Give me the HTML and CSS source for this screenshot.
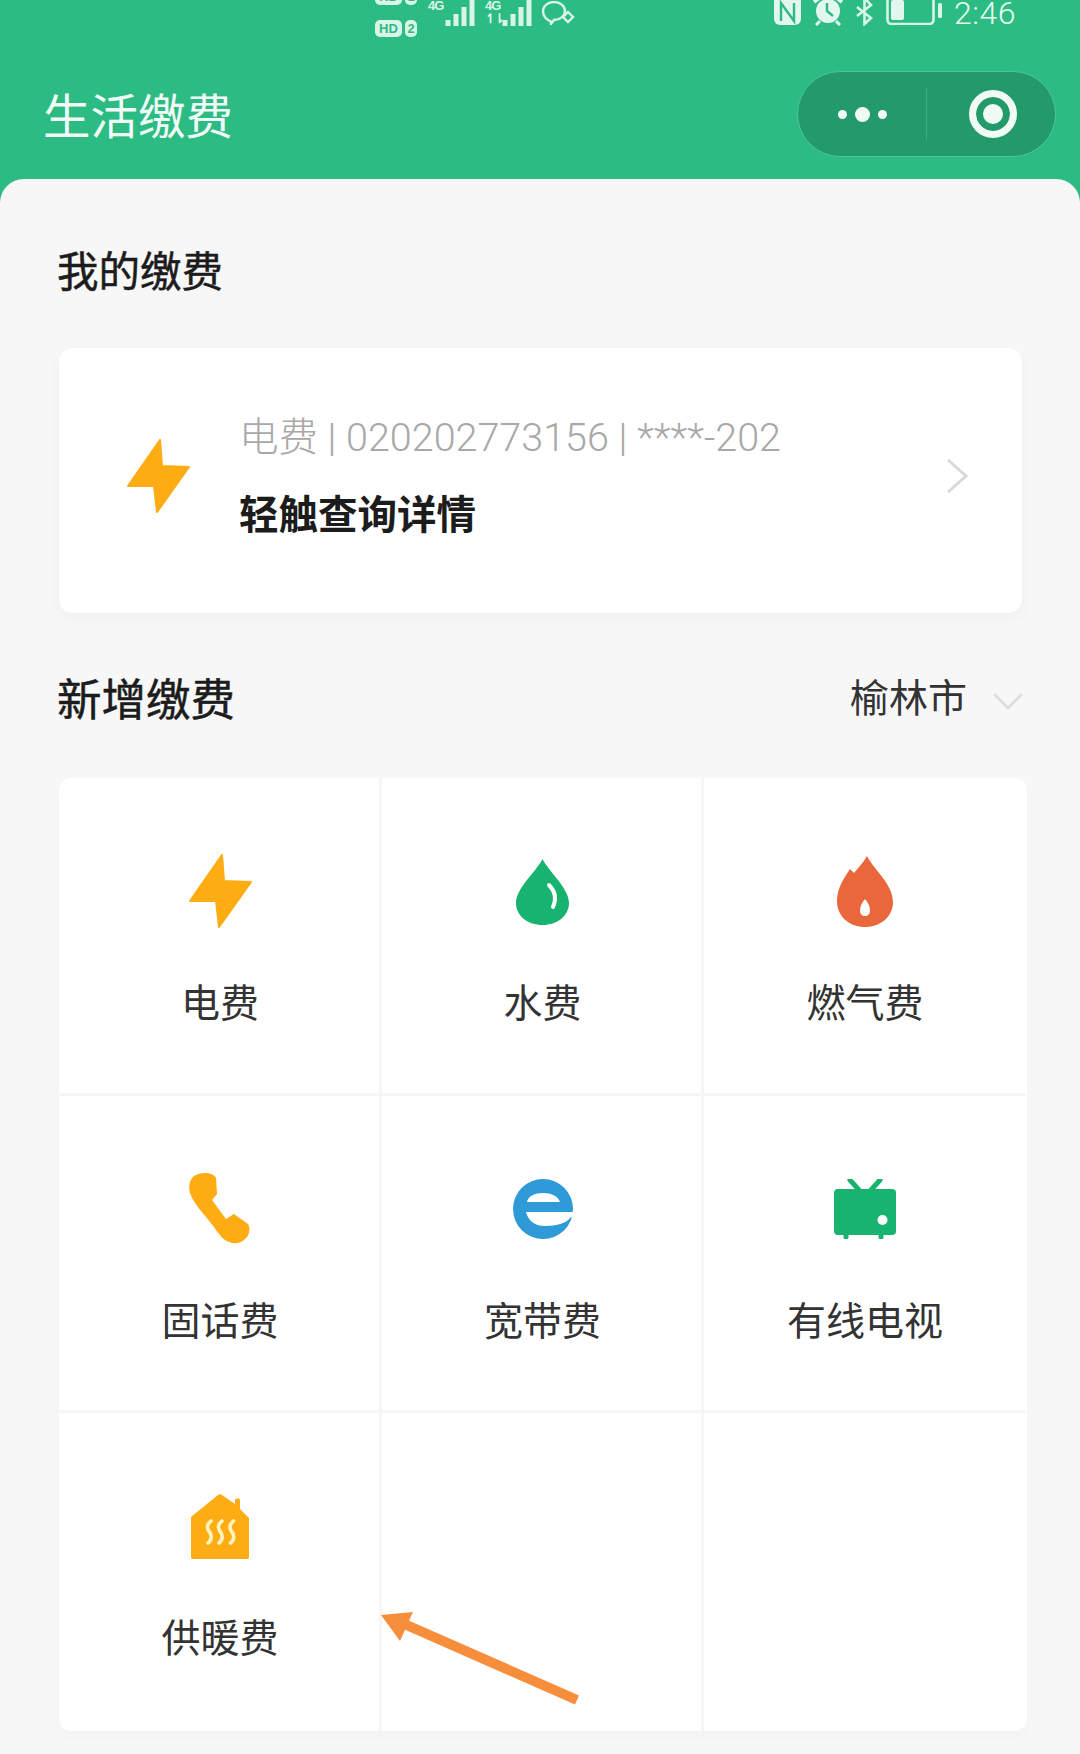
FILE: index.html
```html
<!DOCTYPE html>
<html lang="zh">
<head>
	<meta charset="utf-8">
	<title>生活缴费</title>
	<link rel="stylesheet" href="styles.css">
</head>
<body>
	<header class="top">
		<div class="status">
			<div class="status-left">
				<div class="hd-col">
					<div class="hd-row"><span class="pill">HD</span><span class="pill sim">1</span></div>
					<div class="hd-row"><span class="pill">HD</span><span class="pill sim">2</span></div>
				</div>
				<div class="signal">
					<span class="net">4G</span>
					<svg width="32" height="26" viewBox="0 0 32 26"><path d="M3 26v-6M11 26v-12M19 26v-19M27 26v-26" stroke="#d8f5e8" stroke-width="5"/></svg>
				</div>
				<div class="signal">
					<span class="net">4G<i>↿⇂</i></span>
					<svg width="32" height="26" viewBox="0 0 32 26"><path d="M3 26v-6M11 26v-12M19 26v-19M27 26v-26" stroke="#d8f5e8" stroke-width="5"/></svg>
				</div>
				<svg class="chat" width="33" height="24" viewBox="0 0 33 24" fill="none" stroke="#d8f5e8" stroke-width="2.4">
					<path d="M9 20.5 C3 18 1 14 1 10 C1 5 6 1 12 1 C18 1 23 5 23 10 C23 15 18 19 12 19 L9 23 Z"/>
					<path d="M26 11 L31 16 L26 21 L21 16 Z"/>
				</svg>
			</div>
			<div class="status-right">
				<svg width="27" height="25" viewBox="0 0 27 25"><rect y="-6" width="27" height="31" rx="6" fill="#e2f7ed"/><path d="M7 21 V3 L20 21 V3" fill="none" stroke="#2dbb84" stroke-width="2.4"/></svg>
				<svg width="30" height="26" viewBox="0 0 30 26"><circle cx="15" cy="11" r="12" fill="#e2f7ed"/><path d="M14 3 V11 L20 16" fill="none" stroke="#2dbb84" stroke-width="2.4"/><path d="M7 21 L3 25 M23 21 L27 25" stroke="#e2f7ed" stroke-width="3"/><path d="M1 2 L6 -2 M29 2 L24 -2" stroke="#e2f7ed" stroke-width="4"/></svg>
				<svg width="19" height="26" viewBox="0 0 19 26" fill="none" stroke="#d8f5e8" stroke-width="2.6"><path d="M2 7 L16 18 L9.500 24 V-2 L16 5 L2 16"/></svg>
				<svg width="56" height="25" viewBox="0 0 56 25"><rect x="1.500" y="-4" width="46" height="28" rx="4" fill="none" stroke="#d8f5e8" stroke-width="2.6"/><rect x="5" y="0" width="13" height="20" rx="2" fill="#e2f7ed"/><rect x="52" y="3" width="4" height="15" rx="1.500" fill="#d8f5e8"/></svg>
				<span class="clock">2:46</span>
			</div>
		</div>
		<div class="nav">
			<h1 class="nav-title">生活缴费</h1>
			<div class="capsule">
				<div class="capsule-dots"><i></i><b></b><i></i></div>
				<div class="capsule-ring"><span></span></div>
			</div>
		</div>
	</header>

	<main class="sheet">
		<h2 class="title">我的缴费</h2>
		<section class="bill">
			<svg class="bill-icon" width="63" height="74" viewBox="0 0 63 74"><use href="#bolt"/></svg>
			<div class="bill-text">
				<div class="bill-no">电费 | 020202773156 | ****-202</div>
				<div class="bill-hint">轻触查询详情</div>
			</div>
			<svg class="bill-more" width="22" height="36" viewBox="0 0 22 36" fill="none" stroke="#d9d9d9" stroke-width="3"><path d="M2 2 L20 18 L2 34"/></svg>
		</section>

		<div class="add-head">
			<h2 class="title add-title">新增缴费</h2>
			<span class="city">榆林市</span>
			<svg class="city-more" width="30" height="18" viewBox="0 0 30 18" fill="none" stroke="#dcdcdc" stroke-width="2.5"><path d="M1 2 L15 16 L29 2"/></svg>
		</div>

		<section class="grid">
			<div class="cell">
				<div class="cell-icon"><svg width="63" height="74" viewBox="0 0 63 74"><use href="#bolt"/></svg></div>
				<div class="cell-name">电费</div>
			</div>
			<div class="cell">
				<div class="cell-icon">
					<svg width="53" height="67" viewBox="0 0 53 67">
						<path d="M26.500 1 C33 14 53 30 53 45 C53 58 41 67 26.500 67 C12 67 0 58 0 45 C0 30 20 14 26.500 1 Z" fill="#17b36f"/>
						<path d="M33 27 C39 33 41 40 37 49" fill="none" stroke="#fff" stroke-width="4" stroke-linecap="round"/>
					</svg>
				</div>
				<div class="cell-name">水费</div>
			</div>
			<div class="cell">
				<div class="cell-icon">
					<svg width="56" height="71" viewBox="0 0 56 71">
						<path d="M30 0 C37 14 56 28 56 46 C56 61 43 71 28 71 C13 71 0 61 0 45 C0 32 7 22 13 13 L17 17 C21 12 26 7 30 0 Z" fill="#e9673a"/>
						<path d="M28 43 C31 47 33 50 33 54 C33 58 31 60 28 60 C25 60 23 58 23 54 C23 50 25 47 28 43 Z" fill="#fff"/>
					</svg>
				</div>
				<div class="cell-name">燃气费</div>
			</div>
			<div class="cell">
				<div class="cell-icon">
					<svg width="62" height="71" viewBox="0 0 62 71">
						<path d="M16 0 C21 0 26 2 27 5 L28 21 L23 27 L37 46 L45 41 L59 51 C62 56 60 63 56 66 C52 70 47 71 43 70 C35 68 31 63 25 54 C15 41 4 30 1 20 C-1 12 1 6 5 3 C8 1 12 0 16 0 Z" fill="#fdac13"/>
					</svg>
				</div>
				<div class="cell-name">固话费</div>
			</div>
			<div class="cell">
				<div class="cell-icon">
					<svg width="60" height="60" viewBox="0 0 60 60">
						<ellipse cx="30" cy="30" rx="30" ry="30" fill="#2f9ad8"/>
						<path d="M14 23 C15 17 22 14 30 14 C38 14 45 17 47 23 Z" fill="#fff"/>
						<path d="M13 33 H62 V38 H58 C54 44 44 47 32 47 C21 47 15 41 13 33 Z" fill="#fff"/>
					</svg>
				</div>
				<div class="cell-name">宽带费</div>
			</div>
			<div class="cell">
				<div class="cell-icon">
					<svg width="62" height="60" viewBox="0 0 62 60">
						<path d="M16 1 L25 11 M46 1 L37 11" stroke="#17b36f" stroke-width="5" stroke-linecap="round"/>
						<path d="M12 54 V58 M47 54 V58" stroke="#17b36f" stroke-width="5" stroke-linecap="round"/>
						<rect y="10" width="62" height="46" rx="4" fill="#17b36f"/>
						<circle cx="48.500" cy="41" r="5" fill="#fff"/>
					</svg>
				</div>
				<div class="cell-name">有线电视</div>
			</div>
			<div class="cell">
				<div class="cell-icon">
					<svg width="58" height="65" viewBox="0 0 58 65">
						<path d="M27 1 C28 0 30 0 31 1 L44 10 V6 C44 4 49 4 49 6 V15 L58 24 V63 C58 64 57 65 56 65 H2 C1 65 0 64 0 63 V23 Z" fill="#fdac13"/>
						<path d="M20 27 C15 31 16 35 18.500 38 C21 41 21 46 17 49 M31 27 C26 31 27 35 29.500 38 C32 41 32 46 28 49 M42.500 27 C37.500 31 38.500 35 41 38 C43.500 41 43.500 46 39.500 49" fill="none" stroke="#fff3c0" stroke-width="3.600" stroke-linecap="round"/>
					</svg>
				</div>
				<div class="cell-name">供暖费</div>
			</div>
			<div class="cell"></div>
			<div class="cell"></div>
			<svg class="arrow" width="202" height="100" viewBox="0 0 202 100">
				<path d="M1 5 L33 2 L20 31 Z" fill="#f78e3c"/>
				<path d="M22 13 L197 90" stroke="#f78e3c" stroke-width="10"/>
			</svg>
		</section>
	</main>

	<svg class="defs" width="0" height="0">
		<symbol id="bolt" viewBox="0 0 63 74">
			<path d="M33 1 L35 27 L62 28 L30 73 L27 47 L1 47 Z" fill="#fdac13" stroke="#fdac13" stroke-width="2" stroke-linejoin="round"/>
		</symbol>
	</svg>
</body>
</html>
```

FILE: styles.css
```css
* {
	box-sizing: border-box;
}
html, body {
	height: 100%;
}
body {
	margin: 0;
	display: flex;
	flex-direction: column;
	overflow: hidden;
	background: #2dbb84;
	font-family: "Noto Sans CJK SC", "Noto Sans", sans-serif;
	color: #333;
}
h1, h2 {
	margin: 0;
	font-weight: normal;
}

/* top green bar */
.top {
	height: 179px;
	flex: none;
}
.status {
	height: 40px;
	display: flex;
	justify-content: space-between;
	padding: 0 64px 0 375px;
	overflow: hidden;
	color: #d8f5e8;
}
.status-left {
	display: flex;
	align-items: flex-start;
}
.hd-col {
	width: 53px;
	margin-top: -24px;
}
.hd-row {
	display: flex;
	gap: 3px;
	height: 32px;
	align-items: flex-end;
	padding-bottom: 3px;
}
.pill {
	background: #d8f5e8;
	color: #2dbb84;
	border-radius: 5px;
	font: bold 13px/17px "Liberation Sans", sans-serif;
	padding: 0 3px;
	width: 27px;
	text-align: center;
}
.pill.sim {
	width: 12px;
	padding: 0;
}
.signal {
	display: flex;
	width: 57px;
}
.net {
	width: 17px;
	font: bold 13px/12px "Liberation Sans", sans-serif;
	letter-spacing: -1px;
}
.net i {
	display: block;
	font-style: normal;
	font-size: 13px;
	letter-spacing: -2px;
	margin-top: 1px;
}
.chat {
	margin-top: 1px;
}
.status-right {
	display: flex;
	align-items: flex-start;
	gap: 12px;
}
.clock {
	font: 300 32px/26px "Roboto", sans-serif;
	letter-spacing: .5px;
	color: #e8faf2;
}

.nav {
	display: flex;
	align-items: center;
	justify-content: space-between;
	padding: 31px 24px 0 43px;
}
.nav-title {
	font-size: 47.500px;
	line-height: 86px;
	color: #f0fbf6;
}
.capsule {
	width: 259px;
	height: 86px;
	border-radius: 43px;
	background: #239a6c;
	border: 1px solid #4cc697;
	display: flex;
	align-items: center;
}
.capsule-dots {
	width: 129px;
	height: 52px;
	border-right: 1px solid #3aae82;
	display: flex;
	align-items: center;
	justify-content: center;
	gap: 8px;
}
.capsule-dots i {
	width: 9px;
	height: 9px;
	border-radius: 50%;
	background: #f0fbf6;
}
.capsule-dots b {
	width: 15px;
	height: 15px;
	border-radius: 50%;
	background: #f0fbf6;
}
.capsule-ring {
	flex: 1;
	display: flex;
	justify-content: center;
	padding-left: 4px;
}
.capsule-ring span {
	width: 48px;
	height: 48px;
	border-radius: 50%;
	border: 7px solid #f0fbf6;
	background: #f0fbf6;
	box-shadow: inset 0 0 0 7px #239a6c;
}

/* content sheet */
.sheet {
	flex: 1;
	background: #f7f7f7;
	border-radius: 24px 24px 0 0;
	padding: 65px 53px 0 59px;
}
.title {
	margin-left: -2px;
	font-size: 41.500px;
	line-height: 50px;
	color: #1c1c1c;
	-webkit-text-stroke: .5px #1c1c1c;
}

.bill {
	margin: 54px 5px 0 0;
	height: 265px;
	background: #fff;
	border-radius: 14px;
	box-shadow: 0 6px 14px rgba(0, 0, 0, .03);
	display: flex;
	align-items: center;
	padding: 0 54px 9px 68px;
}
.bill-icon {
	flex: none;
}
.bill-text {
	flex: 1;
	margin: 0 0 6px 49px;
}
.bill-no {
	margin-top: 4px;
	font-family: "Roboto", "Noto Sans CJK SC", sans-serif;
	font-size: 39.500px;
	line-height: 50px;
	font-weight: 300;
	color: #a8a8a8;
	white-space: nowrap;
}
.bill-hint {
	margin-top: 24px;
	font-size: 39.500px;
	line-height: 50px;
	font-weight: bold;
	color: #1c1c1c;
}

.add-head {
	display: flex;
	align-items: center;
	margin: 59px 4px 56px 0;
}
.add-title {
	flex: 1;
	font-size: 44.500px;
}
.city {
	font-size: 39px;
	line-height: 50px;
	margin: -4px 26px 0 0;
}
.city-more {
	margin-top: 8px;
}

.grid {
	position: relative;
	display: grid;
	grid-template-columns: 323px 322px 323px;
	grid-auto-rows: 317.500px;
	background: #fff;
	border-radius: 12px;
	box-shadow: 0 6px 14px rgba(0, 0, 0, .02);
}
.cell {
	display: flex;
	flex-direction: column;
	align-items: center;
	padding: 70px 0 0 2px;
	border-right: 3px solid #f6f6f6;
	border-bottom: 3px solid #f6f6f6;
}
.cell:nth-child(3n) {
	border-right-color: transparent;
}
.cell:nth-child(n+7) {
	border-bottom: 0;
}
.cell-icon {
	height: 86px;
	display: flex;
	align-items: center;
}
.cell-icon svg {
	display: block;
}
.cell-name {
	margin-top: 41px;
	font-size: 39px;
	line-height: 50px;
	color: #333;
}

/* annotation on top of the screenshot */
.arrow {
	position: absolute;
	left: 321px;
	top: 832px;
}
.defs {
	position: absolute;
}
```
